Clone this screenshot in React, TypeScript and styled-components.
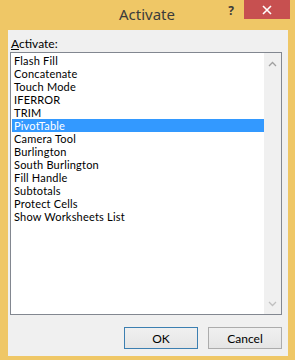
import React from 'react';
import styled, { createGlobalStyle } from 'styled-components';

const items = [
  'Flash Fill',
  'Concatenate',
  'Touch Mode',
  'IFERROR',
  'TRIM',
  'PivotTable',
  'Camera Tool',
  'Burlington',
  'South Burlington',
  'Fill Handle',
  'Subtotals',
  'Protect Cells',
  'Show Worksheets List',
];

const selected = 'PivotTable';

export default function App() {
  return (
    <>
      <GlobalStyle />
      <Window>
        <TitleBar>
          <Title>Activate</Title>
          <HelpButton>?</HelpButton>
          <CloseButton>
            <svg width="10" height="10" viewBox="0 0 10 10">
              <path d="M1 1 L9 9 M9 1 L1 9" stroke="#fff" strokeWidth="1.6" />
            </svg>
          </CloseButton>
        </TitleBar>
        <Client>
          <Label>
            <u>A</u>ctivate:
          </Label>
          <ListBox>
            <Items>
              {items.map((item) => (
                <Item key={item} selected={item === selected}>
                  {item}
                </Item>
              ))}
            </Items>
            <ScrollBar>
              <svg width="9" height="6" viewBox="0 0 9 6">
                <path d="M1 5 L4.5 1.5 L8 5" stroke="#a0a0a0" strokeWidth="1.3" fill="none" />
              </svg>
              <svg width="9" height="6" viewBox="0 0 9 6">
                <path d="M1 1 L4.5 4.5 L8 1" stroke="#c0c0c0" strokeWidth="1.3" fill="none" />
              </svg>
            </ScrollBar>
          </ListBox>
          <ButtonRow>
            <Button primary>OK</Button>
            <Button>Cancel</Button>
          </ButtonRow>
        </Client>
      </Window>
    </>
  );
}

const GlobalStyle = createGlobalStyle`
  html, body {
    margin: 0;
    padding: 0;
    background: #efc766;
  }
  body {
    font-family: Lato, 'Noto Sans', sans-serif;
  }
`;

const Window = styled.div`
  width: 295px;
  height: 360px;
  box-sizing: border-box;
  display: flex;
  flex-direction: column;
  background-color: #efc766;
  padding: 0 7px 4px 8px;
`;

const TitleBar = styled.div`
  position: relative;
  height: 30px;
  display: flex;
  justify-content: center;
  align-items: flex-start;
`;

const Title = styled.div`
  margin-top: 4px;
  margin-right: 2px;
  font-family: 'Noto Sans', sans-serif;
  font-size: 15px;
  color: #3b3b3b;
`;

const HelpButton = styled.div`
  position: absolute;
  right: 54px;
  top: 2px;
  font-family: 'Noto Sans', sans-serif;
  font-size: 12px;
  font-weight: 700;
  color: #3a3a3a;
`;

const CloseButton = styled.div`
  position: absolute;
  right: -2px;
  top: 0;
  width: 46px;
  height: 19px;
  background-color: #c75050;
  display: flex;
  align-items: center;
  justify-content: center;
`;

const Client = styled.div`
  flex: 1;
  display: flex;
  flex-direction: column;
  background-color: #f0f0f0;
  padding: 6px 6px 7px 2px;
`;

const Label = styled.div`
  height: 16px;
  padding-left: 1px;
  font-size: 12px;
  line-height: 16px;
  color: #000;
`;

const ListBox = styled.div`
  height: 263px;
  box-sizing: border-box;
  border: 1px solid #828790;
  background-color: #fff;
  display: flex;
`;

const Items = styled.div`
  flex: 1;
  padding: 1px 0 0 1px;
`;

const Item = styled.div<{ selected?: boolean }>`
  height: 13px;
  line-height: 13px;
  padding-left: 2px;
  font-size: 11px;
  letter-spacing: 0.2px;
  color: ${(p) => (p.selected ? '#fff' : '#000')};
  background-color: ${(p) => (p.selected ? '#3399ff' : 'transparent')};
`;

const ScrollBar = styled.div`
  width: 17px;
  background-color: #f0f0f0;
  display: flex;
  flex-direction: column;
  justify-content: space-between;
  align-items: center;
  padding: 8px 0 7px;
`;

const ButtonRow = styled.div`
  margin-top: 12px;
  display: flex;
  justify-content: flex-end;
  gap: 10px;
`;

const Button = styled.button<{ primary?: boolean }>`
  width: 74px;
  height: 22px;
  box-sizing: border-box;
  border: 1px solid ${(p) => (p.primary ? '#3c7fb1' : '#acacac')};
  background: linear-gradient(#f0f0f0, #e5e5e5);
  font-family: Lato, 'Noto Sans', sans-serif;
  font-size: 12px;
  color: #000;
  padding: 0;
`;
